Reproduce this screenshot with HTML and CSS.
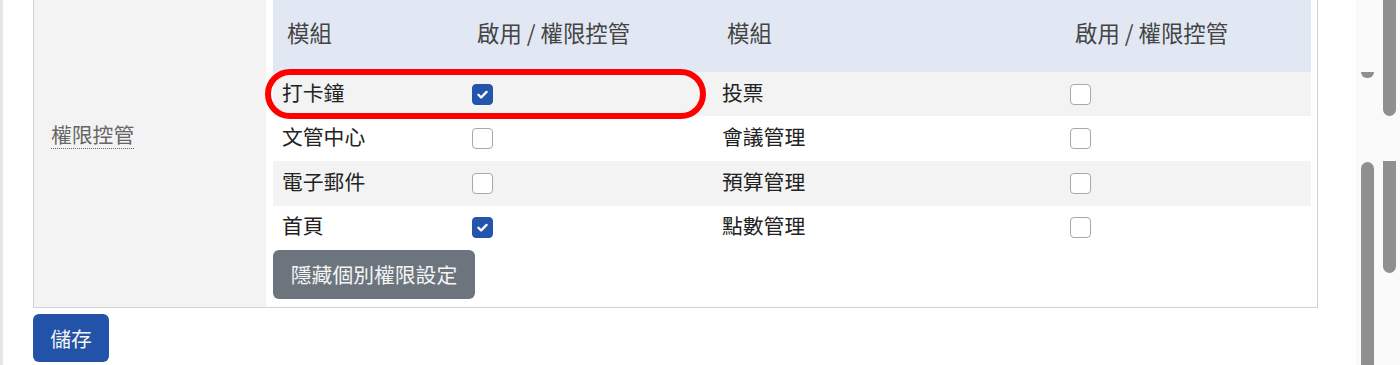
FILE: index.html
```html
<!DOCTYPE html>
<html lang="zh-Hant">
<head>
<meta charset="utf-8">
<title>權限控管</title>
<link rel="stylesheet" href="styles.css">
</head>
<body>
<div class="page">
  <div class="edge"></div>
  <main class="main">
    <div class="panel">
      <div class="label-cell"><abbr class="label" title="權限控管">權限控管</abbr></div>
      <div class="content-cell">
        <div class="table-wrap">
          <table class="perm">
            <colgroup>
              <col class="c1"><col class="c2"><col class="c3"><col class="c4">
            </colgroup>
            <thead>
              <tr><th>模組</th><th>啟用 / 權限控管</th><th>模組</th><th>啟用 / 權限控管</th></tr>
            </thead>
            <tbody>
              <tr class="odd"><td>打卡鐘</td><td><span class="cb on"><svg viewBox="0 0 21 21"><path d="M6 10.8l3 3 6-6.2" fill="none" stroke="#fff" stroke-width="2.6" stroke-linecap="round" stroke-linejoin="round"/></svg></span></td><td>投票</td><td><span class="cb"></span></td></tr>
              <tr><td>文管中心</td><td><span class="cb"></span></td><td>會議管理</td><td><span class="cb"></span></td></tr>
              <tr class="odd"><td>電子郵件</td><td><span class="cb"></span></td><td>預算管理</td><td><span class="cb"></span></td></tr>
              <tr><td>首頁</td><td><span class="cb on"><svg viewBox="0 0 21 21"><path d="M6 10.8l3 3 6-6.2" fill="none" stroke="#fff" stroke-width="2.6" stroke-linecap="round" stroke-linejoin="round"/></svg></span></td><td>點數管理</td><td><span class="cb"></span></td></tr>
            </tbody>
          </table>
          <button class="btn btn-gray" type="button">隱藏個別權限設定</button>
          <div class="ring"></div>
        </div>
      </div>
    </div>
    <button class="btn btn-blue" type="button">儲存</button>
  </main>
  <div class="scrollbars">
    <div class="track track-a">
      <div class="cap"></div>
      <div class="thumb thumb-a2"></div>
    </div>
    <div class="track track-b">
      <div class="thumb thumb-b1"></div>
      <div class="thumb thumb-b2"></div>
    </div>
  </div>
</div>
</body>
</html>
```
FILE: styles.css
```css
* { box-sizing: border-box; }
html, body { margin: 0; padding: 0; background: #fff; overflow: hidden; }
body {
  font-family: "Noto Sans CJK TC", "Noto Sans", sans-serif;
  color: #222;
  height: 365px;
}
.page { display: flex; height: 365px; }
.edge { width: 3px; background: #e6e6e6; flex: none; }
.main { width: 1353px; flex: none; padding-left: 30px; }
.scrollbars {
  width: 44px; flex: none; background: #fafafa;
  display: flex; padding-left: 5px; gap: 9px;
}
.track { width: 13px; display: flex; flex-direction: column; }
.cap {
  margin-top: 72px; height: 6px; background: #8f8f8f;
  border-radius: 0 0 7px 7px;
}
.thumb { background: #8f8f8f; }
.thumb-a2 { margin-top: 84px; flex: 1; border-radius: 7px 7px 0 0; }
.thumb-b1 { height: 116px; border-radius: 0 0 7px 7px; }
.thumb-b2 { margin-top: 45px; height: 112px; border-radius: 0 0 7px 7px; }

.panel {
  width: 1285px;
  margin-top: -6px;
  border: 1px solid #d2d2d2;
  border-top: none;
  display: flex;
}
.label-cell {
  width: 232px; flex: none; background: #f3f3f3;
  display: flex; align-items: center;
  padding: 0 0 31px 17px;
}
.label {
  font-size: 20.8px; color: #666; text-decoration: none;
  border-bottom: 1.5px dotted #666; line-height: 1.3;
}
.content-cell { flex: 1; padding: 0 6px 8px 7px; }
.table-wrap { position: relative; }
.perm { border-collapse: collapse; width: 1038px; table-layout: fixed; }
.c1 { width: 190px; } .c2 { width: 250px; } .c3 { width: 348px; } .c4 { width: 250px; }
.perm th {
  background: #e2e8f3; color: #444; font-weight: normal;
  font-size: 22.4px; text-align: left; height: 77.7px;
  padding: 0 0 0 14px; line-height: 1.4; vertical-align: middle;
}
.perm td {
  font-size: 20.8px; height: 44.67px; padding: 0 0 0 9px;
  line-height: 1.3; vertical-align: middle; color: #222;
}
.perm td:nth-child(odd) { padding-bottom: 4px; }
.perm tr.odd td { background: #f3f3f3; }
.cb {
  display: block; width: 21px; height: 21px;
  border: 1px solid #a8a8a8; border-radius: 4px; background: #fff;
}
.cb.on { background: #2355aa; border-color: #2355aa; }
.cb svg { display: block; width: 19px; height: 19px; }
.btn {
  font-family: inherit; font-size: 20.8px; border: none;
  color: #f4f4f4; height: 48.5px; border-radius: 6px;
  padding: 0 17px; line-height: 1; display: block;
}
.btn-gray { background: #6c757d; width: 202px; padding: 0 17px; }
.btn-blue { background: #2353a8; width: 76px; margin-top: 6px; padding: 0; }
.ring {
  position: absolute; left: -8px; top: 75px;
  width: 441px; height: 50px;
  border: 6px solid #ff0000; border-radius: 25px;
  pointer-events: none;
}
```
